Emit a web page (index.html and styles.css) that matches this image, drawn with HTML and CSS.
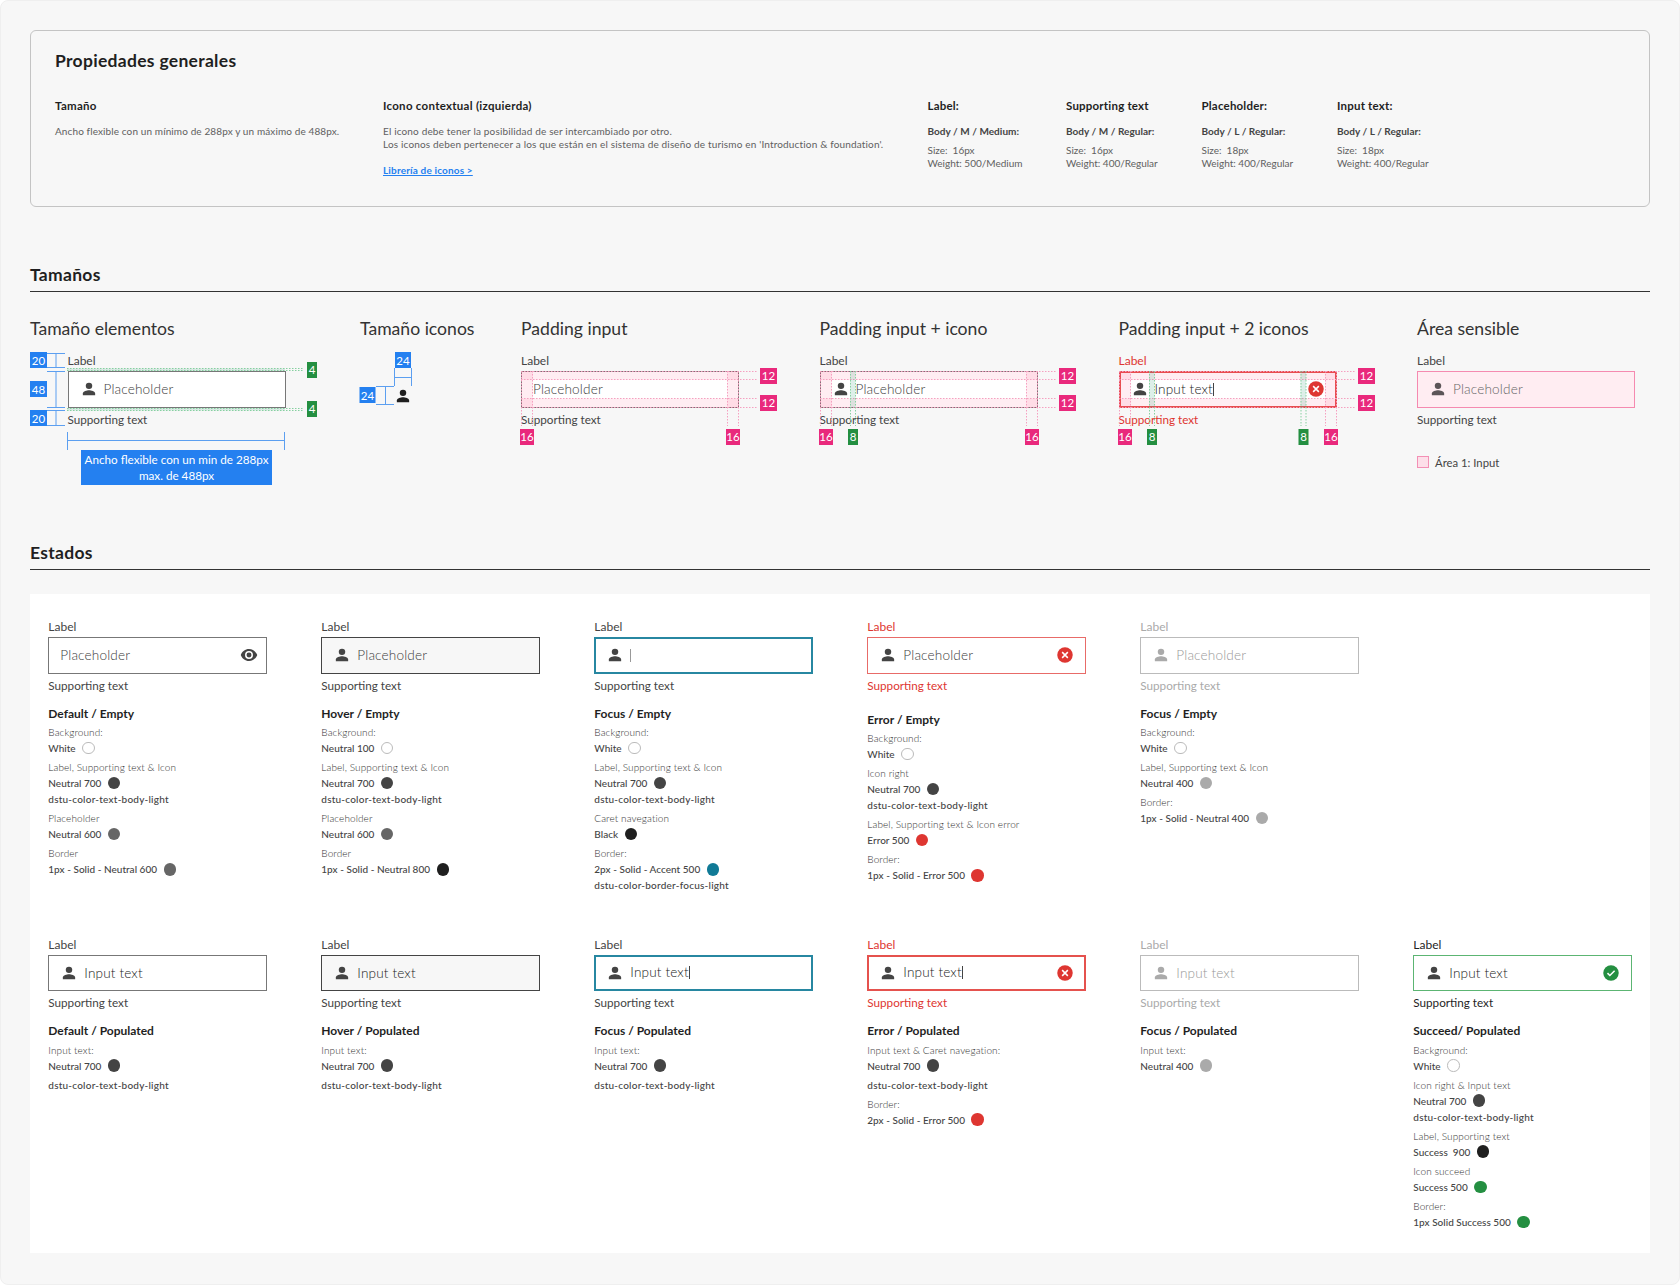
FILE: index.html
```html
<!DOCTYPE html>
<html lang="es">
<head>
    <meta charset="UTF-8">
    <meta name="viewport" content="width=device-width, initial-scale=1.0">
    <title>Input - Propiedades</title>
    <link rel="stylesheet" href="styles.css">
</head>
<body>

<!-- Shared icons and guides -->
<svg class="sprite" aria-hidden="true">
    <defs>
        <symbol id="person" viewBox="0 0 24 24">
            <circle cx="12" cy="7.8" r="4.3" fill="currentColor"/>
            <path d="M3.8 20.2v-2.1c0-2.9 5.4-4.4 8.2-4.4s8.2 1.5 8.2 4.4v2.1z" fill="currentColor"/>
        </symbol>
        <symbol id="eye" viewBox="0 0 24 24">
            <path d="M12 4C7 4 2.7 7.3 1 12c1.7 4.7 6 8 11 8s9.3-3.3 11-8c-1.7-4.7-6-8-11-8zm0 13.3a5.3 5.3 0 1 1 0-10.6 5.3 5.3 0 0 1 0 10.6z" fill="currentColor"/>
            <circle cx="12" cy="12" r="3.3" fill="currentColor"/>
        </symbol>
        <symbol id="error" viewBox="0 0 24 24">
            <circle cx="12" cy="12" r="10.3" fill="#de3631"/>
            <path d="M8.2 8.2l7.6 7.6M15.8 8.2l-7.6 7.6" stroke="#fff" stroke-width="2"/>
        </symbol>
        <symbol id="check" viewBox="0 0 24 24">
            <circle cx="12" cy="12" r="10.3" fill="#248f41"/>
            <path d="M7.3 12.2l3.2 3.2 6.3-6.4" fill="none" stroke="#fff" stroke-width="2"/>
        </symbol>
        <g id="padding-guides">
            <g class="pink-area">
                <rect x="0" y="18" width="12" height="36.5"/>
                <rect x="206" y="18" width="12" height="36.5"/>
                <rect x="0" y="18" width="218" height="9"/>
                <rect x="0" y="45.5" width="218" height="9"/>
            </g>
            <path class="pink-dots" d="M0 18.5H236M0 26.5H236M0 45.5H236M0 54.5H236M.5 18V73M11.5 18V73M206.5 18V73M217.5 18V73"/>
            <g class="pink-badge">
                <rect x="239" y="15" width="17" height="16"/>
                <rect x="239" y="42" width="17" height="16"/>
                <rect x="-1" y="76" width="14" height="16"/>
                <rect x="205" y="76" width="14" height="16"/>
            </g>
            <g class="badge-text">
                <text x="247.5" y="27">12</text>
                <text x="247.5" y="54">12</text>
                <text x="6" y="88">16</text>
                <text x="212" y="88">16</text>
            </g>
        </g>
        <g id="gap-guide">
            <rect class="gap-area" x="0" y="18" width="5.5" height="36.5"/>
            <path class="green-dots" d="M.5 18V73M5.5 18V73"/>
            <rect class="green-badge" x="-2" y="76" width="10" height="16"/>
            <text class="badge-text" x="3" y="88">8</text>
        </g>
    </defs>
</svg>

<div class="page">

    <section class="general">
        <h2>Propiedades generales</h2>
        <div class="props">
            <div class="prop">
                <h4>Tamaño</h4>
                <p>Ancho flexible con un mínimo de 288px y un máximo de 488px.</p>
            </div>
            <div class="prop">
                <h4>Icono contextual (izquierda)</h4>
                <p>El icono debe tener la posibilidad de ser intercambiado por otro.</p>
                <p>Los iconos deben pertenecer a los que están en el sistema de diseño de turismo en 'Introduction &amp; foundation'.</p>
                <a class="link" href="#">Librería de iconos &gt;</a>
            </div>
            <div class="prop type">
                <h4>Label:</h4>
                <h5>Body / M / Medium:</h5>
                <p>Size:&nbsp; 16px</p>
                <p>Weight: 500/Medium</p>
            </div>
            <div class="prop type">
                <h4>Supporting text</h4>
                <h5>Body / M / Regular:</h5>
                <p>Size:&nbsp; 16px</p>
                <p>Weight: 400/Regular</p>
            </div>
            <div class="prop type">
                <h4>Placeholder:</h4>
                <h5>Body / L / Regular:</h5>
                <p>Size:&nbsp; 18px</p>
                <p>Weight: 400/Regular</p>
            </div>
            <div class="prop type">
                <h4>Input text:</h4>
                <h5>Body / L / Regular:</h5>
                <p>Size:&nbsp; 18px</p>
                <p>Weight: 400/Regular</p>
            </div>
        </div>
    </section>

    <h2 class="section-title">Tamaños</h2>
    <section class="sizes">
        <div class="size">
            <h3>Tamaño elementos</h3>
            <div class="figure indented">
                <div class="field">
                    <label>Label</label>
                    <div class="input"><svg class="icon"><use href="#person"/></svg><span class="placeholder">Placeholder</span></div>
                    <small>Supporting text</small>
                </div>
                <svg class="guides">
                    <path class="blue-line" d="M-20 .5H-2M-20 14.5H-2M-11 .5V14.5M-20 18.5H-2M-20 54.5H-2M-11 18.5V54.5M-20 57.5H-2M-20 72.5H-2M-11 57.5V72.5"/>
                    <path class="blue-line" d="M.5 79V97M217.5 79V97M.5 87.5H217.5"/>
                    <rect class="gap-area" x="0" y="15.5" width="218" height="2.5"/>
                    <rect class="gap-area" x="0" y="55" width="218" height="2.5"/>
                    <path class="green-dots" d="M0 15.5H237M0 17.5H237M0 55.5H237M0 57.5H237"/>
                    <g class="blue-badge">
                        <rect x="-37" y="-1" width="17" height="16"/>
                        <rect x="-37" y="28" width="17" height="16"/>
                        <rect x="-37" y="57" width="17" height="16"/>
                    </g>
                    <g class="green-badge">
                        <rect x="240" y="9" width="10" height="16"/>
                        <rect x="240" y="48" width="10" height="16"/>
                    </g>
                    <g class="badge-text">
                        <text x="-28.5" y="12">20</text>
                        <text x="-28.5" y="41">48</text>
                        <text x="-28.5" y="70">20</text>
                        <text x="245" y="21">4</text>
                        <text x="245" y="60">4</text>
                    </g>
                </svg>
                <p class="width-note">Ancho flexible con un min de 288px<br>max. de 488px</p>
            </div>
        </div>
        <div class="size">
            <h3>Tamaño iconos</h3>
            <div class="figure">
                <svg class="icon icon-sample"><use href="#person"/></svg>
                <svg class="guides">
                    <path class="blue-line" d="M34.5 15V33M51.5 15V33M34 24.5H52M16 33.5H34M16 51.5H34M25.5 33V51"/>
                    <g class="blue-badge">
                        <rect x="35" y="-1" width="16" height="16"/>
                        <rect x="-.5" y="34" width="16" height="16"/>
                    </g>
                    <g class="badge-text">
                        <text x="43" y="12">24</text>
                        <text x="7.5" y="47">24</text>
                    </g>
                </svg>
            </div>
        </div>
        <div class="size">
            <h3>Padding input</h3>
            <div class="figure">
                <div class="field">
                    <label>Label</label>
                    <div class="input"><span class="placeholder">Placeholder</span></div>
                    <small>Supporting text</small>
                </div>
                <svg class="guides"><use href="#padding-guides"/></svg>
            </div>
        </div>
        <div class="size">
            <h3>Padding input + icono</h3>
            <div class="figure">
                <div class="field">
                    <label>Label</label>
                    <div class="input"><svg class="icon"><use href="#person"/></svg><span class="placeholder">Placeholder</span></div>
                    <small>Supporting text</small>
                </div>
                <svg class="guides"><use href="#padding-guides"/><use href="#gap-guide" x="30"/></svg>
            </div>
        </div>
        <div class="size">
            <h3>Padding input + 2 iconos</h3>
            <div class="figure">
                <div class="field error thick">
                    <label>Label</label>
                    <div class="input"><svg class="icon"><use href="#person"/></svg><span class="caret">Input text</span><svg class="icon right"><use href="#error"/></svg></div>
                    <small>Supporting text</small>
                </div>
                <svg class="guides"><use href="#padding-guides"/><use href="#gap-guide" x="30"/><use href="#gap-guide" x="181.5"/></svg>
            </div>
        </div>
        <div class="size">
            <h3>Área sensible</h3>
            <div class="figure">
                <div class="field sensitive">
                    <label>Label</label>
                    <div class="input"><svg class="icon"><use href="#person"/></svg><span class="placeholder">Placeholder</span></div>
                    <small>Supporting text</small>
                </div>
                <div class="legend"><span class="legend-box"></span>Área 1: Input</div>
            </div>
        </div>
    </section>

    <h2 class="section-title states-title">Estados</h2>
    <section class="states">
        <!-- Empty -->
        <div class="state">
            <div class="field">
                <label>Label</label>
                <div class="input"><span class="placeholder">Placeholder</span><svg class="icon right eye"><use href="#eye"/></svg></div>
                <small>Supporting text</small>
            </div>
            <h4>Default / Empty</h4>
            <dl>
                <dt>Background:</dt>
                <dd>White <i class="dot white"></i></dd>
                <dt>Label, Supporting text &amp; Icon</dt>
                <dd>Neutral 700 <i class="dot n700"></i></dd>
                <dd class="token">dstu-color-text-body-light</dd>
                <dt>Placeholder</dt>
                <dd>Neutral 600 <i class="dot n600"></i></dd>
                <dt>Border</dt>
                <dd>1px - Solid - Neutral 600 <i class="dot n600"></i></dd>
            </dl>
        </div>
        <div class="state">
            <div class="field hover">
                <label>Label</label>
                <div class="input"><svg class="icon"><use href="#person"/></svg><span class="placeholder">Placeholder</span></div>
                <small>Supporting text</small>
            </div>
            <h4>Hover / Empty</h4>
            <dl>
                <dt>Background:</dt>
                <dd>Neutral 100 <i class="dot white"></i></dd>
                <dt>Label, Supporting text &amp; Icon</dt>
                <dd>Neutral 700 <i class="dot n700"></i></dd>
                <dd class="token">dstu-color-text-body-light</dd>
                <dt>Placeholder</dt>
                <dd>Neutral 600 <i class="dot n600"></i></dd>
                <dt>Border</dt>
                <dd>1px - Solid - Neutral 800 <i class="dot n800"></i></dd>
            </dl>
        </div>
        <div class="state">
            <div class="field focus">
                <label>Label</label>
                <div class="input"><svg class="icon"><use href="#person"/></svg><span class="caret empty"></span></div>
                <small>Supporting text</small>
            </div>
            <h4>Focus / Empty</h4>
            <dl>
                <dt>Background:</dt>
                <dd>White <i class="dot white"></i></dd>
                <dt>Label, Supporting text &amp; Icon</dt>
                <dd>Neutral 700 <i class="dot n700"></i></dd>
                <dd class="token">dstu-color-text-body-light</dd>
                <dt>Caret navegation</dt>
                <dd>Black <i class="dot n800"></i></dd>
                <dt>Border:</dt>
                <dd>2px - Solid - Accent 500 <i class="dot accent"></i></dd>
                <dd class="token">dstu-color-border-focus-light</dd>
            </dl>
        </div>
        <div class="state">
            <div class="field error">
                <label>Label</label>
                <div class="input"><svg class="icon"><use href="#person"/></svg><span class="placeholder">Placeholder</span><svg class="icon right"><use href="#error"/></svg></div>
                <small>Supporting text</small>
            </div>
            <h4 class="lower">Error / Empty</h4>
            <dl>
                <dt>Background:</dt>
                <dd>White <i class="dot white"></i></dd>
                <dt>Icon right</dt>
                <dd>Neutral 700 <i class="dot n700"></i></dd>
                <dd class="token">dstu-color-text-body-light</dd>
                <dt>Label, Supporting text &amp; Icon error</dt>
                <dd>Error 500 <i class="dot red"></i></dd>
                <dt>Border:</dt>
                <dd>1px - Solid - Error 500 <i class="dot red"></i></dd>
            </dl>
        </div>
        <div class="state">
            <div class="field disabled">
                <label>Label</label>
                <div class="input"><svg class="icon"><use href="#person"/></svg><span class="placeholder">Placeholder</span></div>
                <small>Supporting text</small>
            </div>
            <h4>Focus / Empty</h4>
            <dl>
                <dt>Background:</dt>
                <dd>White <i class="dot white"></i></dd>
                <dt>Label, Supporting text &amp; Icon</dt>
                <dd>Neutral 400 <i class="dot n400"></i></dd>
                <dt>Border:</dt>
                <dd>1px - Solid - Neutral 400 <i class="dot n400"></i></dd>
            </dl>
        </div>
        <div class="state"></div>

        <!-- Populated -->
        <div class="state">
            <div class="field">
                <label>Label</label>
                <div class="input"><svg class="icon"><use href="#person"/></svg><span>Input text</span></div>
                <small>Supporting text</small>
            </div>
            <h4>Default / Populated</h4>
            <dl>
                <dt>Input text:</dt>
                <dd>Neutral 700 <i class="dot n700"></i></dd>
                <dd class="token spaced">dstu-color-text-body-light</dd>
            </dl>
        </div>
        <div class="state">
            <div class="field hover">
                <label>Label</label>
                <div class="input"><svg class="icon"><use href="#person"/></svg><span>Input text</span></div>
                <small>Supporting text</small>
            </div>
            <h4>Hover / Populated</h4>
            <dl>
                <dt>Input text:</dt>
                <dd>Neutral 700 <i class="dot n700"></i></dd>
                <dd class="token spaced">dstu-color-text-body-light</dd>
            </dl>
        </div>
        <div class="state">
            <div class="field focus">
                <label>Label</label>
                <div class="input"><svg class="icon"><use href="#person"/></svg><span class="caret">Input text</span></div>
                <small>Supporting text</small>
            </div>
            <h4>Focus / Populated</h4>
            <dl>
                <dt>Input text:</dt>
                <dd>Neutral 700 <i class="dot n700"></i></dd>
                <dd class="token spaced">dstu-color-text-body-light</dd>
            </dl>
        </div>
        <div class="state">
            <div class="field error thick">
                <label>Label</label>
                <div class="input"><svg class="icon"><use href="#person"/></svg><span class="caret">Input text</span><svg class="icon right"><use href="#error"/></svg></div>
                <small>Supporting text</small>
            </div>
            <h4>Error / Populated</h4>
            <dl>
                <dt>Input text &amp; Caret navegation:</dt>
                <dd>Neutral 700 <i class="dot n700"></i></dd>
                <dd class="token spaced">dstu-color-text-body-light</dd>
                <dt>Border:</dt>
                <dd>2px - Solid - Error 500 <i class="dot red"></i></dd>
            </dl>
        </div>
        <div class="state">
            <div class="field disabled">
                <label>Label</label>
                <div class="input"><svg class="icon"><use href="#person"/></svg><span>Input text</span></div>
                <small>Supporting text</small>
            </div>
            <h4>Focus / Populated</h4>
            <dl>
                <dt>Input text:</dt>
                <dd>Neutral 400 <i class="dot n400"></i></dd>
            </dl>
        </div>
        <div class="state">
            <div class="field success">
                <label>Label</label>
                <div class="input"><svg class="icon"><use href="#person"/></svg><span>Input text</span><svg class="icon right"><use href="#check"/></svg></div>
                <small>Supporting text</small>
            </div>
            <h4>Succeed/ Populated</h4>
            <dl>
                <dt>Background:</dt>
                <dd>White <i class="dot white"></i></dd>
                <dt>Icon right &amp; Input text</dt>
                <dd>Neutral 700 <i class="dot n700"></i></dd>
                <dd class="token">dstu-color-text-body-light</dd>
                <dt>Label, Supporting text</dt>
                <dd>Success&nbsp; 900 <i class="dot n800"></i></dd>
                <dt>Icon succeed</dt>
                <dd>Success 500 <i class="dot green"></i></dd>
                <dt>Border:</dt>
                <dd>1px Solid Success 500 <i class="dot green"></i></dd>
            </dl>
        </div>
    </section>

</div>

</body>
</html>
```
FILE: styles.css
```css
* {
    box-sizing: border-box;
}
body {
    margin: 0;
    background-color: #fff;
    color: #444;
    font-family: Lato, "Open Sans", sans-serif;
}
h2, h3, h4, h5, p, dl, dd {
    margin: 0;
}
.sprite {
    position: absolute;
    width: 0;
    height: 0;
}
.page {
    height: 1285px;
    padding: 29px;
    border: 1px solid #efefef;
    border-radius: 8px;
    background-color: #f7f7f7;
    white-space: nowrap;
}

/* General properties */
.general {
    height: 177px;
    padding: 18px 24px;
    border: 1px solid #c4c4c4;
    border-radius: 6px;
}
h2 {
    font-size: 17.5px;
    line-height: 24px;
    font-weight: 700;
    letter-spacing: 0.3px;
    color: #1f1f1f;
}
.props {
    display: grid;
    grid-template-columns: 328px 544.5px 138.5px 135.5px 135.5px auto;
    margin-top: 25px;
}
.prop h4 {
    margin-bottom: 10.5px;
    font-size: 11.5px;
    line-height: 16px;
    letter-spacing: 0.28px;
    color: #1f1f1f;
}
.prop.type h4 {
    letter-spacing: 0.2px;
}
.prop p, .prop h5, .link {
    font-size: 10px;
    line-height: 13px;
    letter-spacing: 0.16px;
}
.prop:first-child p {
    letter-spacing: 0.11px;
}
.prop h5 {
    margin-bottom: 6px;
    letter-spacing: 0.04px;
    color: #444;
}
.prop p {
    color: #606060;
}
.prop.type p {
    letter-spacing: 0;
}
.link {
    display: inline-block;
    margin-top: 13px;
    font-weight: 700;
    color: #2480f0;
}

/* Sizes */
.section-title {
    margin-top: 56px;
    height: 29px;
    border-bottom: 1px solid #333;
}
.sizes {
    display: grid;
    grid-template-columns: 330px 161px 298.5px 299px 298.5px auto;
    height: 249px;
    padding-top: 25px;
}
.sizes h3 {
    font-size: 17.6px;
    line-height: 24px;
    font-weight: 400;
    color: #333;
}
.figure {
    position: relative;
    margin-top: 12px;
}
.indented {
    margin-left: 37px;
}
.icon-sample {
    display: block;
    margin-left: 34px;
    transform: translateY(34px);
    color: #1f1f1f;
}
.guides {
    position: absolute;
    top: 0;
    left: 0;
    width: 1px;
    height: 1px;
    overflow: visible;
}
.blue-line {
    stroke: #5c9ff0;
    fill: none;
}
.pink-dots, .green-dots {
    fill: none;
    stroke-dasharray: 1.5 1.5;
}
.pink-dots {
    stroke: #f5a0c0;
}
.green-dots {
    stroke: #86d0a0;
}
.pink-area {
    fill: #ff2e6e;
    fill-opacity: .085;
}
.gap-area {
    fill: #2d9a78;
    fill-opacity: .16;
}
.blue-badge {
    fill: #2480f0;
}
.pink-badge {
    fill: #e9297c;
}
.green-badge {
    fill: #248f41;
}
.badge-text {
    fill: #fff;
    font-size: 11.5px;
    text-anchor: middle;
}
.width-note {
    width: 191px;
    margin: 22px 0 0 14px;
    padding: 1.5px 0;
    background-color: #2480f0;
    color: #fff;
    font-size: 11.7px;
    line-height: 16px;
    text-align: center;
}
.legend {
    display: flex;
    align-items: center;
    gap: 6px;
    margin-top: 28px;
    font-size: 11.3px;
}
.legend-box {
    width: 12px;
    height: 12px;
    border: 1px solid #f390b5;
    background-color: #fddfe9;
}

/* Field */
.field {
    display: flex;
    flex-direction: column;
    width: 218.5px;
    font-size: 12px;
}
.indented .field {
    margin-left: 0.5px;
}
.sizes .field {
    width: 218px;
}
.field label {
    line-height: 15px;
}
.input {
    display: flex;
    align-items: center;
    gap: 6px;
    height: 36.5px;
    margin: 3px 0;
    padding: 0 12px;
    box-shadow: inset 0 0 0 1px #777;
    background-color: #fff;
    font-size: 13.6px;
}
.input span {
    font-weight: 300;
    letter-spacing: 0.15px;
    color: #222;
}
.field small {
    font-size: 11.7px;
    line-height: 17px;
}
.icon {
    flex: none;
    width: 18px;
    height: 18px;
}
.icon.right {
    margin-left: auto;
}
.icon.eye {
    margin-right: -3px;
}
.input .placeholder {
    color: #3c3c3c;
}
.caret {
    border-right: 1px solid #444;
    line-height: 13px;
}
.caret.empty {
    height: 13px;
    border-color: #999;
}
.hover .input {
    box-shadow: inset 0 0 0 1px #444;
    background-color: #f7f7f7;
}
.focus .input {
    box-shadow: inset 0 0 0 2px #2787a1;
}
.error label, .error small {
    color: #de3631;
}
.error .input {
    box-shadow: inset 0 0 0 1px #e86b68;
}
.error.thick .input {
    box-shadow: inset 0 0 0 2px #e5524e;
}
.disabled {
    color: #aaa;
}
.disabled .input span {
    color: #999;
}
.disabled .input {
    box-shadow: inset 0 0 0 1px #bbb;
}
.success label, .success small {
    color: #1f1f1f;
}
.success .input {
    box-shadow: inset 0 0 0 1px #5cb573;
}
.sensitive .input {
    box-shadow: inset 0 0 0 1px #f58ab0;
    background-color: #ffedf2;
}
.sensitive .icon {
    color: #5c5558;
}
.sensitive .input .placeholder {
    color: #666;
}

/* States */
.states-title {
    margin-top: 0;
}
.states {
    display: grid;
    grid-template-columns: repeat(6, 273px);
    grid-template-rows: 317.5px auto;
    height: 659px;
    margin-top: 24px;
    padding: 25px 18.3px;
    background-color: #fff;
}
.state h4 {
    margin: 12px 0 2.5px;
    font-size: 12px;
    line-height: 16px;
    color: #1f1f1f;
}
.state h4.lower {
    margin-top: 18px;
}
.state dt, .state dd {
    display: flex;
    align-items: center;
    height: 16px;
    font-size: 10px;
}
.state dt {
    font-weight: 300;
    letter-spacing: 0.1px;
    color: #333;
}
.state dd {
    gap: 6.5px;
    font-weight: 500;
    letter-spacing: 0.02px;
}
.state .token {
    letter-spacing: 0.22px;
}
.state dd + dt, .state .spaced {
    margin-top: 3.1px;
}
.dot {
    flex: none;
    width: 12.5px;
    height: 12.5px;
    border-radius: 50%;
}
.white {
    border: 1px solid #bbb;
    background-color: #fff;
}
.n400 {
    background-color: #aaa;
}
.n600 {
    background-color: #666;
}
.n700 {
    background-color: #444;
}
.n800 {
    background-color: #1f1f1f;
}
.accent {
    background-color: #107a96;
}
.red {
    background-color: #de3631;
}
.green {
    background-color: #248f41;
}
```
